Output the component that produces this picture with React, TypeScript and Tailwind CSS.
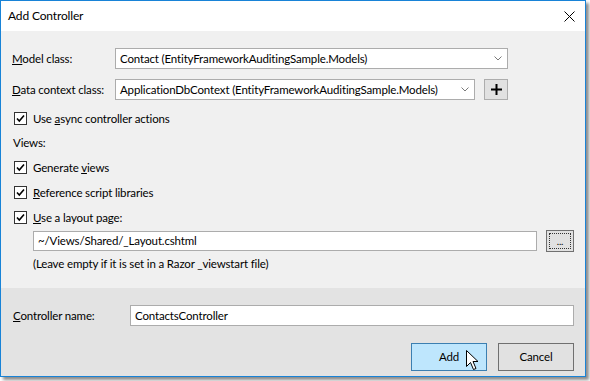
import React from "react";

const font = "font-['Lato',sans-serif]";

function Checkbox() {
  return (
    <span className="flex h-[13px] w-[13px] shrink-0 items-center justify-center border border-[#333] bg-white">
      <svg width="11" height="11" viewBox="0 0 11 11">
        <path d="M2 5.5 L4.3 8 L9 2.5" fill="none" stroke="#000" strokeWidth="1.6" />
      </svg>
    </span>
  );
}

function Chevron() {
  return (
    <svg width="8" height="5" viewBox="0 0 8 5" className="ml-auto mr-[5px] shrink-0">
      <path d="M0.5 0.5 L4 4 L7.5 0.5" fill="none" stroke="#7a7a7a" strokeWidth="1" />
    </svg>
  );
}

function CheckRow({ children }: { children: React.ReactNode }) {
  return (
    <div className="flex h-[13px] items-center pl-[2px]">
      <Checkbox />
      <span className="ml-[6px] whitespace-nowrap leading-none">{children}</span>
    </div>
  );
}

export default function App() {
  return (
    <div className={`h-[381px] w-[590px] bg-white text-[11.5px] tracking-[-0.15px] text-black ${font}`}>
      <div className="flex h-[377px] w-[586px] flex-col border border-[#1883d7] bg-white shadow-[3px_3px_3px_rgba(0,0,0,0.45)]">
        {/* title bar */}
        <div className="flex h-[30px] shrink-0 items-center pl-[7px] pr-[10px]">
          <span className="text-[12px]">Add Controller</span>
          <svg width="11" height="11" viewBox="0 0 11 11" className="ml-auto">
            <path d="M0.5 0.5 L10.5 10.5 M10.5 0.5 L0.5 10.5" stroke="#000" strokeWidth="1" />
          </svg>
        </div>

        {/* main section */}
        <div className="flex h-[257px] shrink-0 flex-col bg-[#f0f0f0] pl-[11px] pr-[11px] pt-[17px]">
          <div className="flex h-[21px] items-center">
            <span className="w-[103px] shrink-0 whitespace-nowrap">
              <u>M</u>odel class:
            </span>
            <div className="flex h-[21px] w-[393px] shrink-0 items-center whitespace-nowrap border border-[#acacac] bg-white pl-[4px]">
              Contact (EntityFrameworkAuditingSample.Models)
              <Chevron />
            </div>
          </div>

          <div className="mt-[10px] flex h-[21px] items-center">
            <span className="w-[103px] shrink-0 whitespace-nowrap">
              <u>D</u>ata context class:
            </span>
            <div className="flex h-[21px] w-[360px] shrink-0 items-center whitespace-nowrap border border-[#acacac] bg-white pl-[4px]">
              ApplicationDbContext (EntityFrameworkAuditingSample.Models)
              <Chevron />
            </div>
            <div className="ml-[9px] flex h-[21px] w-[24px] shrink-0 items-center justify-center border border-[#adadad] bg-[#e1e1e1]">
              <svg width="11" height="11" viewBox="0 0 11 11">
                <path d="M5.5 0 V11 M0 5.5 H11" stroke="#000" strokeWidth="2" />
              </svg>
            </div>
          </div>

          <div className="mt-[12px]">
            <CheckRow>
              Use <u>a</u>sync controller actions
            </CheckRow>
          </div>

          <div className="mt-[10px] flex h-[16px] items-center pl-[1px]">Views:</div>

          <div className="mt-[10px]">
            <CheckRow>
              Generate <u>v</u>iews
            </CheckRow>
          </div>
          <div className="mt-[12px]">
            <CheckRow>
              <u>R</u>eference script libraries
            </CheckRow>
          </div>
          <div className="mt-[12px]">
            <CheckRow>
              <u>U</u>se a layout page:
            </CheckRow>
          </div>

          <div className="mt-[6px] flex h-[22px] items-center pl-[21px]">
            <div className="flex h-[20px] w-[504px] shrink-0 items-center border border-[#acacac] bg-white pl-[4px]">
              ~/Views/Shared/_Layout.cshtml
            </div>
            <div className="ml-[9px] flex h-[22px] w-[28px] shrink-0 items-center justify-center border border-[#707070] bg-[#e1e1e1] p-[2px]">
              <div className="flex h-full w-full items-end justify-center border border-dotted border-[#333] pb-[2px] text-[10px] leading-none">
                ...
              </div>
            </div>
          </div>

          <div className="mt-[4px] flex h-[16px] items-center whitespace-nowrap pl-[21px]">
            (Leave empty if it is set in a Razor _viewstart file)
          </div>
        </div>

        {/* bottom section */}
        <div className="flex flex-1 flex-col bg-[#e3e3e3] pl-[12px] pr-[11px] pt-[17px]">
          <div className="flex h-[21px] items-center">
            <span className="w-[117px] shrink-0 whitespace-nowrap">
              <u>C</u>ontroller name:
            </span>
            <div className="flex h-[21px] w-[444px] shrink-0 items-center border border-[#acacac] bg-white pl-[4px]">
              ContactsController
            </div>
          </div>

          <div className="mt-[17px] flex justify-end gap-[11px]">
            <div className="relative flex h-[28px] w-[76px] items-center justify-center border border-[#3c7fb1] bg-[#bee6fd]">
              Add
              <svg
                width="13"
                height="21"
                viewBox="0 0 13 21"
                className="absolute left-[54px] top-[6px]"
              >
                <path
                  d="M0.5 0.5 V16.5 L4.5 12.5 L7.5 19.5 L10 18.5 L7 11.5 H12 Z"
                  fill="#fff"
                  stroke="#000"
                  strokeWidth="1"
                />
              </svg>
            </div>
            <div className="flex h-[28px] w-[76px] items-center justify-center border border-[#707070] bg-[#e1e1e1]">
              Cancel
            </div>
          </div>
        </div>
      </div>
    </div>
  );
}
